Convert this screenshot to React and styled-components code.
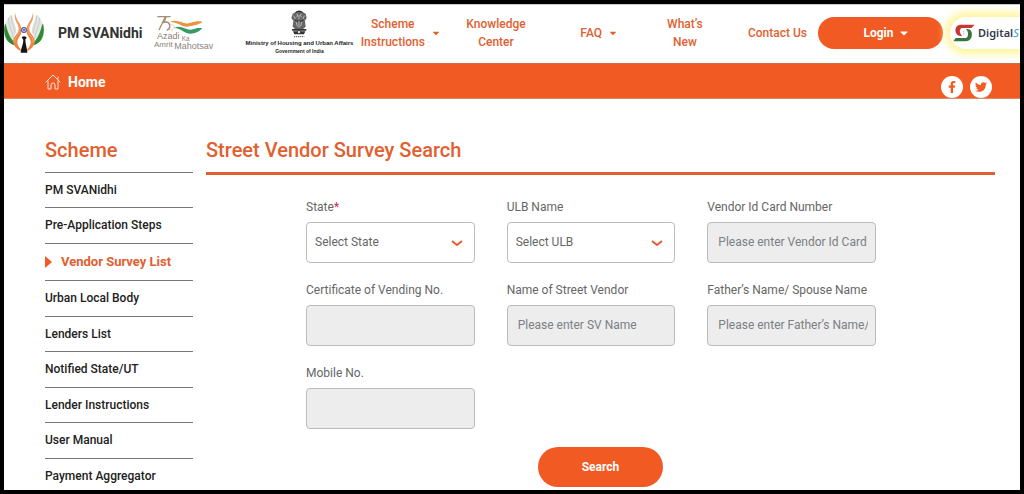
import React from "react";
import styled, { createGlobalStyle } from "styled-components";
import { FaFacebookF, FaTwitter, FaCaretDown } from "react-icons/fa";

const ORANGE = "#f15a22";
const TEXT_ORANGE = "#e2602f";

const GlobalStyle = createGlobalStyle`
    *{
        box-sizing: border-box;
    }
    body{
        margin: 0;
        font-family: Roboto, sans-serif;
        font-size: 12px;
        line-height: 18px;
        color: #222;
        background: white;
    }
    a{
        color: inherit;
        text-decoration: none;
    }
    button, input, select{
        font-family: inherit;
    }
`;

const Page = styled.div`
    min-height: 100vh;
    border: 4px solid black;
`;

const Header = styled.header`
    display: grid;
    grid-template-columns: auto 1fr auto;
    align-items: center;
    height: 59px;
    padding-bottom: 3px;
    border-top: 1px solid #ccc;
    overflow: hidden;
`;

const Brands = styled.div`
    display: flex;
    align-items: center;
`;

const BrandName = styled.span`
    margin: 0 12px 0 14px;
    font-size: 14px;
    font-weight: 700;
    color: #333;
`;

const Ministry = styled.div`
    display: flex;
    flex-direction: column;
    align-items: center;
    width: 106px;
    margin-left: 30px;
    font-family: "Liberation Sans Narrow", "Liberation Sans", sans-serif;
    font-weight: 700;
    color: #222;
    white-space: nowrap;
    strong{
        font-size: 6px;
        line-height: 10px;
    }
    small{
        font-size: 5px;
        line-height: 7px;
    }
`;

const Nav = styled.nav`
    display: grid;
    grid-template-columns: 97fr 94fr 113fr 59fr 104fr;
    align-items: center;
`;

const NavLink = styled.a`
    display: flex;
    align-items: center;
    justify-content: ${({ $end }) => ($end ? "flex-end" : "center")};
    gap: 6px;
    padding-right: ${({ $end }) => ($end ? "11px" : "0")};
    font-weight: 500;
    text-align: center;
    color: ${TEXT_ORANGE};
    svg{
        width: 10px;
        height: 10px;
    }
`;

const Actions = styled.div`
    display: flex;
    gap: 7px;
`;

const PillButton = styled.button`
    display: flex;
    align-items: center;
    justify-content: center;
    gap: 4px;
    width: 125px;
    height: ${({ $tall }) => ($tall ? "40px" : "32px")};
    padding: 0 0 0 ${({ $tall }) => ($tall ? "0" : "12px")};
    border: 0;
    border-radius: 20px;
    font-size: 12px;
    font-weight: 700;
    color: white;
    background: ${ORANGE};
`;

const DigitalLink = styled.a`
    display: flex;
    align-items: center;
    gap: 3px;
    width: 70px;
    height: 32px;
    padding-left: 3px;
    border-radius: 16px 0 0 16px;
    font-family: "Noto Sans", sans-serif;
    font-size: 11px;
    font-weight: 600;
    color: #333a4d;
    background: white;
    box-shadow: 0 0 8px 5px #fdf59a;
    svg{
        flex: none;
    }
    em{
        font-weight: 400;
        color: #3a9ccb;
    }
`;

const Bar = styled.div`
    display: flex;
    justify-content: space-between;
    height: 36px;
    padding: 0 28px 0 41px;
    border-top: 1px solid #c9714f;
    border-bottom: 1px solid #d98a6c;
    background: ${ORANGE};
`;

const HomeLink = styled.a`
    display: flex;
    align-items: center;
    gap: 7px;
    padding-top: 2px;
    font-size: 14px;
    font-weight: 700;
    color: white;
`;

const Social = styled.div`
    display: flex;
    align-items: flex-end;
    gap: 7px;
    a{
        display: flex;
        align-items: center;
        justify-content: center;
        width: 22px;
        height: 22px;
        border-radius: 50%;
        color: ${ORANGE};
        background: white;
    }
`;

const Content = styled.div`
    display: grid;
    grid-template-columns: 148px 1fr;
    gap: 13px;
    padding: 38px 25px 0 41px;
`;

const Title = styled.h2`
    margin: 0;
    padding-bottom: 9px;
    font-size: 20px;
    font-weight: 500;
    line-height: 26px;
    color: ${TEXT_ORANGE};
    border-bottom: ${({ $thick }) => ($thick ? `3px solid ${TEXT_ORANGE}` : "1px solid #777")};
`;

const Menu = styled.ul`
    margin: 0;
    padding: 0;
    list-style: none;
`;

const MenuItem = styled.li`
    padding: ${({ $active }) => ($active ? "9px 0" : "8px 0")};
    font-size: ${({ $active }) => ($active ? "13px" : "12px")};
    font-weight: ${({ $active }) => ($active ? 700 : 500)};
    color: ${({ $active }) => ($active ? TEXT_ORANGE : "#222")};
    border-bottom: 1px solid #777;
    &:nth-child(even){
        padding-bottom: 9px;
    }
    &:last-child{
        padding-bottom: 4px;
        border-bottom: 0;
    }
    a{
        display: flex;
        align-items: center;
        gap: 9px;
    }
`;

const Form = styled.form`
    display: flex;
    flex-direction: column;
    align-items: center;
    gap: 18px;
    padding-top: 23px;
`;

const Fields = styled.div`
    display: grid;
    grid-template-columns: repeat(3, 1fr);
    gap: 18px 32px;
    align-self: stretch;
    padding: 0 119px 0 100px;
`;

const Field = styled.div`
    display: flex;
    flex-direction: column;
    gap: 6px;
    min-width: 0;
    label{
        color: #666;
    }
    label span{
        color: #e0213f;
    }
`;

const Input = styled.input`
    width: 100%;
    height: 41px;
    padding: 0 7px 2px 10px;
    border: 1px solid #bbb;
    border-radius: 4px;
    font-size: 12px;
    color: #666;
    background: #ededed;
    &::placeholder{
        color: #7c7f84;
    }
`;

const SelectBox = styled.div`
    display: grid;
    align-items: center;
    > *{
        grid-area: 1 / 1;
    }
    select{
        width: 100%;
        height: 41px;
        padding: 0 8px 2px;
        border: 1px solid #bbb;
        border-radius: 4px;
        font-size: 12px;
        color: #666;
        background: white;
        appearance: none;
    }
    svg{
        justify-self: end;
        margin-right: 12px;
        pointer-events: none;
    }
`;

const menu = [
    "PM SVANidhi",
    "Pre-Application Steps",
    "Vendor Survey List",
    "Urban Local Body",
    "Lenders List",
    "Notified State/UT",
    "Lender Instructions",
    "User Manual",
    "Payment Aggregator",
];

const fields = [
    { id: "state", label: "State", required: true, option: "Select State" },
    { id: "ulb", label: "ULB Name", option: "Select ULB" },
    { id: "card", label: "Vendor Id Card Number", placeholder: "Please enter Vendor Id Card" },
    { id: "certificate", label: "Certificate of Vending No." },
    { id: "vendor", label: "Name of Street Vendor", placeholder: "Please enter SV Name" },
    { id: "father", label: "Father’s Name/ Spouse Name", placeholder: "Please enter Father’s Name/" },
    { id: "mobile", label: "Mobile No." },
];

const Hand = () =>
<g fill="none">
    <path d="M3 34 C-5 66 6 94 32 100 C26 78 16 56 3 34Z" fill="#2f8a35" />
    <path d="M5 34 C8 24 11 20 14 16 C18 8 22 8 24 10 C28 32 38 44 36 60 C32 74 25 78 27 88 C14 70 8 52 5 34Z" fill="#e3e6e3" />
    <path d="M13 18 C14 42 25 56 28 78M22 11 C22 34 32 44 33 64" stroke="#b9beb9" strokeWidth="2" />
    <path d="M33 2 C28 30 50 38 43 58 C38 70 25 76 28 92 C31 106 40 112 54 118 C48 108 40 102 40 90 C40 78 54 70 53 54 C52 34 36 26 33 2Z" fill="#ec8648" />
    <path d="M35 10 C34 30 52 40 47 58 C42 72 31 76 33 91" stroke="#f6b88d" strokeWidth="2" />
</g>;

const HandsLogo = () =>
<svg width="40" height="42" viewBox="0 0 120 126" aria-hidden="true">
    <Hand />
    <g transform="translate(120 0) scale(-1 1)"><Hand /></g>
    <circle cx="60" cy="54" r="8" fill="#dfe3f5" stroke="#5563ab" strokeWidth="3" />
    <path d="M60 46V62M52 54H68M54 48L66 60M66 48L54 60" stroke="#5563ab" strokeWidth="2" />
    <path d="M53 76 C58 70 67 72 68 78 L64 82 C64 96 69 108 70 122 H50 C51 108 58 98 58 84Z" fill="#151515" />
</svg>;

const AzadiLogo = () =>
<svg width="62" height="38" viewBox="0 0 186 114" aria-hidden="true">
    <path d="M10 8H34L15 48M35 8H50M36 8L30 25C48 20 54 42 38 49" fill="none" stroke="#a38d70" strokeWidth="4" />
    <circle cx="53" cy="40" r="8" fill="none" stroke="#b8b39c" strokeWidth="3" strokeDasharray="2 2" />
    <path d="M48 24C72 12 86 34 108 27C123 22 133 20 145 23C133 34 119 33 106 37C85 43 75 24 48 24Z" fill="#eb9140" />
    <path d="M61 42C82 30 98 53 117 46C131 41 136 41 145 43C133 54 125 59 109 59C90 59 83 43 61 42Z" fill="#379b65" />
    <g fill="#8c8378" fontFamily="Liberation Sans, sans-serif">
        <text x="9" y="76" fontSize="27">Azadi</text>
        <text x="83" y="82" fontSize="19">Ka</text>
        <text x="0" y="98" fontSize="24">Amrit</text>
        <text x="61" y="106" fontSize="27">Mahotsav</text>
    </g>
</svg>;

const Emblem = () =>
<svg width="18" height="28" viewBox="0 0 54 84" aria-hidden="true">
    <path d="M18 5C24 0 32 0 37 5L47 11L50 23L45 33L47 50L39 57H15L8 50L10 33L4 24L8 11Z" fill="#666" />
    <path d="M19 12L24 15L20 22M35 12L30 15L35 22M27 16V29M22 31H32M10 17L16 24L12 31M44 17L39 24L43 31M18 34L22 49M36 34L32 49M27 34V53" fill="none" stroke="#e2e2e2" strokeWidth="2" />
    <path d="M17 7Q27 1 37 7M14 28Q20 39 27 29Q34 39 41 28" fill="none" stroke="#222" strokeWidth="3" />
    <path d="M6 57H49V62H6ZM9 64H46L42 73H13Z" fill="#333" />
    <circle cx="27" cy="66" r="5" fill="#ddd" stroke="#222" strokeWidth="2" />
    <path d="M12 80H43" stroke="#555" strokeWidth="3" strokeDasharray="4 2" />
</svg>;

const DigitalLogo = () =>
<svg width="22" height="18" viewBox="0 0 66 54" aria-hidden="true">
    <path d="M65 2H23C10 2 4 15 9 27C12 35 21 37 27 35C20 29 17 15 27 12H55Z" fill="#c93535" />
    <path d="M1 52H38C53 52 59 38 56 25C54 17 48 14 39 15C46 22 49 39 38 42H8Z" fill="#38753f" />
    <path d="M34 20C25 22 39 28 30 34" fill="none" stroke="#c3cdd6" strokeWidth="3" />
</svg>;

const HouseIcon = () =>
<svg width="16" height="16" viewBox="0 0 16 16" fill="none" stroke="#ffe3d6" strokeLinecap="round" strokeLinejoin="round" aria-hidden="true">
    <path d="M1 8L8 1L15 8M3 7V15H6V11Q6 9 8 9Q10 9 10 11V15H13V7M13 5V3" />
</svg>;

const Chevron = () =>
<svg width="12" height="8" viewBox="0 0 12 8" aria-hidden="true">
    <path d="M1 2L6 6L11 2" fill="none" stroke={TEXT_ORANGE} strokeWidth="2" />
</svg>;

const Arrow = () =>
<svg width="7" height="12" viewBox="0 0 7 12" aria-hidden="true">
    <path d="M0 0L7 6L0 12Z" fill={ORANGE} />
</svg>;

const FormField = ({ id, label, required, option, placeholder }) =>
<Field>
    <label htmlFor={id}>{label}{required && <span>*</span>}</label>
    {option
        ? <SelectBox>
            <select id={id}><option>{option}</option></select>
            <Chevron />
        </SelectBox>
        : <Input id={id} type="text" placeholder={placeholder} />}
</Field>;

const App = () =>
<Page>
    <GlobalStyle />
    <Header>
        <Brands>
            <HandsLogo />
            <BrandName>PM SVANidhi</BrandName>
            <AzadiLogo />
            <Ministry>
                <Emblem />
                <strong>Ministry of Housing and Urban Affairs</strong>
                <small>Government of India</small>
            </Ministry>
        </Brands>
        <Nav>
            <NavLink href="#"><span>Scheme<br />Instructions</span><FaCaretDown /></NavLink>
            <NavLink href="#"><span>Knowledge<br />Center</span></NavLink>
            <NavLink href="#"><span>FAQ</span><FaCaretDown /></NavLink>
            <NavLink href="#"><span>What’s<br />New</span></NavLink>
            <NavLink href="#" $end><span>Contact Us</span></NavLink>
        </Nav>
        <Actions>
            <PillButton type="button">Login <FaCaretDown /></PillButton>
            <DigitalLink href="#"><DigitalLogo /><span>Digital<em>S</em></span></DigitalLink>
        </Actions>
    </Header>
    <Bar>
        <HomeLink href="#"><HouseIcon />Home</HomeLink>
        <Social>
            <a href="#" aria-label="Facebook"><FaFacebookF size={12} /></a>
            <a href="#" aria-label="Twitter"><FaTwitter size={12} /></a>
        </Social>
    </Bar>
    <Content>
        <aside>
            <Title>Scheme</Title>
            <Menu>
                {menu.map(item => {
                    const active = item === "Vendor Survey List";
                    return (
                        <MenuItem key={item} $active={active}>
                            <a href="#">{active && <Arrow />}{item}</a>
                        </MenuItem>
                    );
                })}
            </Menu>
        </aside>
        <main>
            <Title $thick>Street Vendor Survey Search</Title>
            <Form>
                <Fields>
                    {fields.map(field => <FormField key={field.id} {...field} />)}
                </Fields>
                <PillButton type="button" $tall>Search</PillButton>
            </Form>
        </main>
    </Content>
</Page>;

export default App;
